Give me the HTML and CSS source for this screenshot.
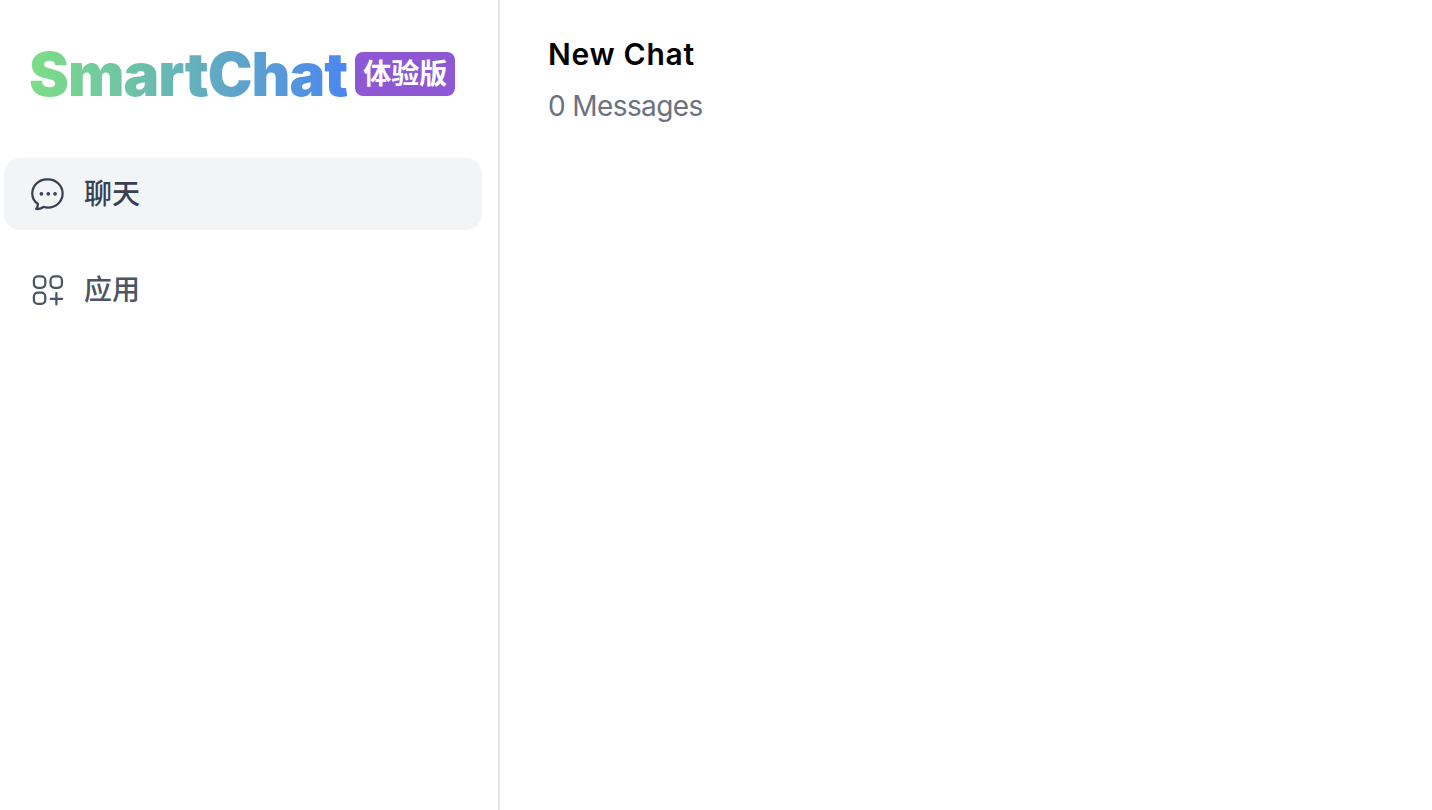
FILE: index.html
```
<!DOCTYPE html>
<html lang="zh">
<head>
<meta charset="utf-8">
<title>SmartChat</title>
<link rel="stylesheet" href="styles.css">
</head>
<body>
<div class="app">
  <aside class="sidebar">
    <div class="brand">
      <span class="logo">SmartChat</span>
      <span class="badge">体验版</span>
    </div>
    <nav class="nav">
      <a class="nav-item active">
        <svg class="icon" viewBox="0 0 24 24" fill="none" stroke="currentColor" stroke-width="1.5" stroke-linecap="round" stroke-linejoin="round"><path d="M12 2.25c5.39 0 9.75 4.2 9.75 9.4 0 5.2-4.36 9.4-9.75 9.4-1.05 0-2.06-.16-3-.46-.9.9-2.9 1.5-4.9 1.4.8-.8 1.2-1.9 1.2-3.3-2.45-1.75-3.8-4.2-3.8-7.04 0-5.2 4.36-9.4 9.75-9.4z"/><circle class="dot" cx="7.6" cy="11.9" r=".5"/><circle class="dot" cx="12.2" cy="11.9" r=".5"/><circle class="dot" cx="16.7" cy="11.9" r=".5"/></svg>
        <span class="nav-label">聊天</span>
      </a>
      <a class="nav-item">
        <svg class="icon" viewBox="0 0 24 24" fill="none" stroke="currentColor" stroke-width="1.5" stroke-linecap="round" stroke-linejoin="round"><rect x="2.6" y="2.9" width="7.6" height="7.6" rx="2.6"/><rect x="13.7" y="2.9" width="7.6" height="7.6" rx="2.6"/><rect x="2.6" y="13.7" width="7.6" height="7.6" rx="2.6"/><path d="M17.6 14v7.6M13.8 17.9h7.6"/></svg>
        <span class="nav-label">应用</span>
      </a>
    </nav>
  </aside>
  <main class="main">
    <h1 class="title">New Chat</h1>
    <p class="count">0 Messages</p>
  </main>
</div>
</body>
</html>
```
FILE: styles.css
```
* { box-sizing: border-box; }
html, body { margin: 0; height: 100%; background: #fff; }
body { font-family: Inter, "Noto Sans CJK SC", sans-serif; }
.app { display: flex; height: 810px; overflow: hidden; }
.sidebar { width: 500px; flex: none; border-right: 2px solid #e5e7eb; padding: 0 16px 0 4px; }
.brand { display: flex; align-items: center; height: 148px; padding: 0 0 0 25px; gap: 8px; }
.logo { font-size: 60px; line-height: 60px; font-weight: 900; letter-spacing: -1px; background: linear-gradient(to right, #7ede86, #4c86f0); -webkit-background-clip: text; background-clip: text; color: transparent; }
.badge { width: 100px; height: 44px; border-radius: 8px; background: #8e58d4; color: #fff; font-size: 28px; line-height: 44px; font-weight: 700; text-align: center; white-space: nowrap; }
.nav { display: flex; flex-direction: column; gap: 24px; margin-top: 10px; }
.nav-item { display: flex; align-items: center; gap: 18px; height: 72px; padding-left: 26px; border-radius: 16px; color: #4b5563; font-size: 28px; font-weight: 500; }
.nav-item.active { background: #f3f4f6; color: #374151; }
.nav-label { line-height: 40px; margin-top: -1px; }
.icon { width: 36px; height: 36px; flex: none; }
.dot { fill: currentColor; }
.main { flex: 1; padding: 32px 48px; }
.title { margin: 0; font-size: 30px; line-height: 44px; font-weight: 600; color: #000; letter-spacing: 0.7px; }
.count { margin: 10px 0 0; font-size: 28px; line-height: 40px; color: #6b7280; letter-spacing: -0.6px; }
```
